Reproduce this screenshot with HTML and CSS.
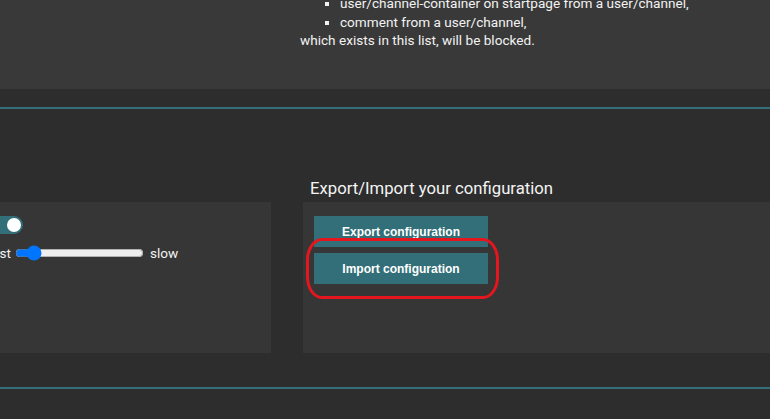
FILE: index.html
```html
<!DOCTYPE html>
<html lang="en">
<head>
<meta charset="utf-8">
<title>Settings</title>
<link rel="stylesheet" href="styles.css">
</head>
<body>
  <section class="top-panel">
    <div class="top-spacer"></div>
    <div class="top-text">
      <ul class="block-list">
        <li>user/channel-container on startpage from a user/channel,</li>
        <li>comment from a user/channel,</li>
      </ul>
      <p class="block-note">which exists in this list, will be blocked.</p>
    </div>
  </section>

  <div class="divider"></div>

  <section class="settings-row">
    <div class="col col-left">
      <h2 class="col-title">General</h2>
      <div class="panel panel-left">
        <div class="opt-row">
          <span class="opt-label">Animation</span>
          <span class="toggle"><span class="knob"></span></span>
        </div>
        <div class="opt-row speed-row">
          <span class="speed-label">Speed: fast</span>
          <input class="speed" type="range" min="0" max="100" value="10">
          <span class="slow-label">slow</span>
        </div>
      </div>
    </div>
    <div class="col col-right">
      <h2 class="col-title">Export/Import your configuration</h2>
      <div class="panel panel-right">
        <button class="btn">Export configuration</button>
        <button class="btn">Import configuration</button>
        <div class="annotation"></div>
      </div>
    </div>
  </section>

  <div class="divider divider-bottom"></div>
</body>
</html>
```

FILE: styles.css
```css
html, body {
  margin: 0;
  padding: 0;
}
body {
  width: 770px;
  height: 419px;
  overflow: hidden;
  background: #2d2d2d;
  color: #f2f2f2;
  font-family: Roboto, "Noto Sans", sans-serif;
  font-size: 13.6px;
}

.top-panel {
  height: 89px;
  background: #393939;
  display: flex;
  overflow: hidden;
}
.top-spacer {
  width: 300px;
  flex: none;
}
.top-text {
  line-height: 18.5px;
  margin-top: -6px;
}
.block-list {
  margin: 0;
  padding-left: 40px;
  list-style: square;
}
.block-note {
  margin: 0;
}

.divider {
  height: 2px;
  background: #326f78;
  margin-top: 18px;
}
.divider-bottom {
  margin-top: 34px;
}

.settings-row {
  display: flex;
  gap: 32px;
  margin-left: -100px;
  padding-top: 70px;
}
.col {
  flex: none;
  display: flex;
  flex-direction: column;
}
.col-left { width: 371px; }
.col-right { width: 520px; }

.col-title {
  margin: 0 0 3px 7px;
  font-size: 16.7px;
  font-weight: 400;
  line-height: 20px;
  color: #f4f4f4;
}

.panel {
  height: 151px;
  box-sizing: border-box;
  background: #363636;
  position: relative;
}
.panel-left {
  padding: 14px 12px;
}
.panel-right {
  padding: 14px 11px;
  display: flex;
  flex-direction: column;
  align-items: flex-start;
  gap: 6px;
}

.opt-row {
  display: flex;
  align-items: center;
  height: 18px;
}
.opt-label {
  width: 75px;
  flex: none;
  overflow: hidden;
  white-space: nowrap;
}
.toggle {
  width: 36px;
  height: 18px;
  border-radius: 9px;
  background: #326f78;
  display: flex;
  align-items: center;
  justify-content: flex-end;
  padding: 0 2px;
  box-sizing: border-box;
}
.knob {
  width: 14px;
  height: 14px;
  border-radius: 50%;
  background: #ffffff;
}

.speed-row {
  height: 20px;
  margin-top: 9px;
}
.speed-label {
  width: 99px;
  flex: none;
  text-align: right;
  white-space: nowrap;
}
.speed {
  width: 129px;
  margin: 0 0 0 4px;
  accent-color: #0075ff;
}
.slow-label {
  margin-left: 6px;
}

.btn {
  width: 174px;
  height: 31px;
  border: none;
  border-radius: 0;
  background: #326f78;
  color: #ffffff;
  font-family: "Liberation Sans", Arial, sans-serif;
  font-weight: 700;
  font-size: 12px;
  padding: 0;
  cursor: pointer;
}

.annotation {
  position: absolute;
  left: 3px;
  top: 36px;
  width: 193px;
  height: 61px;
  box-sizing: border-box;
  border: 3px solid #e5161e;
  border-radius: 16px / 22px;
  pointer-events: none;
}
```
